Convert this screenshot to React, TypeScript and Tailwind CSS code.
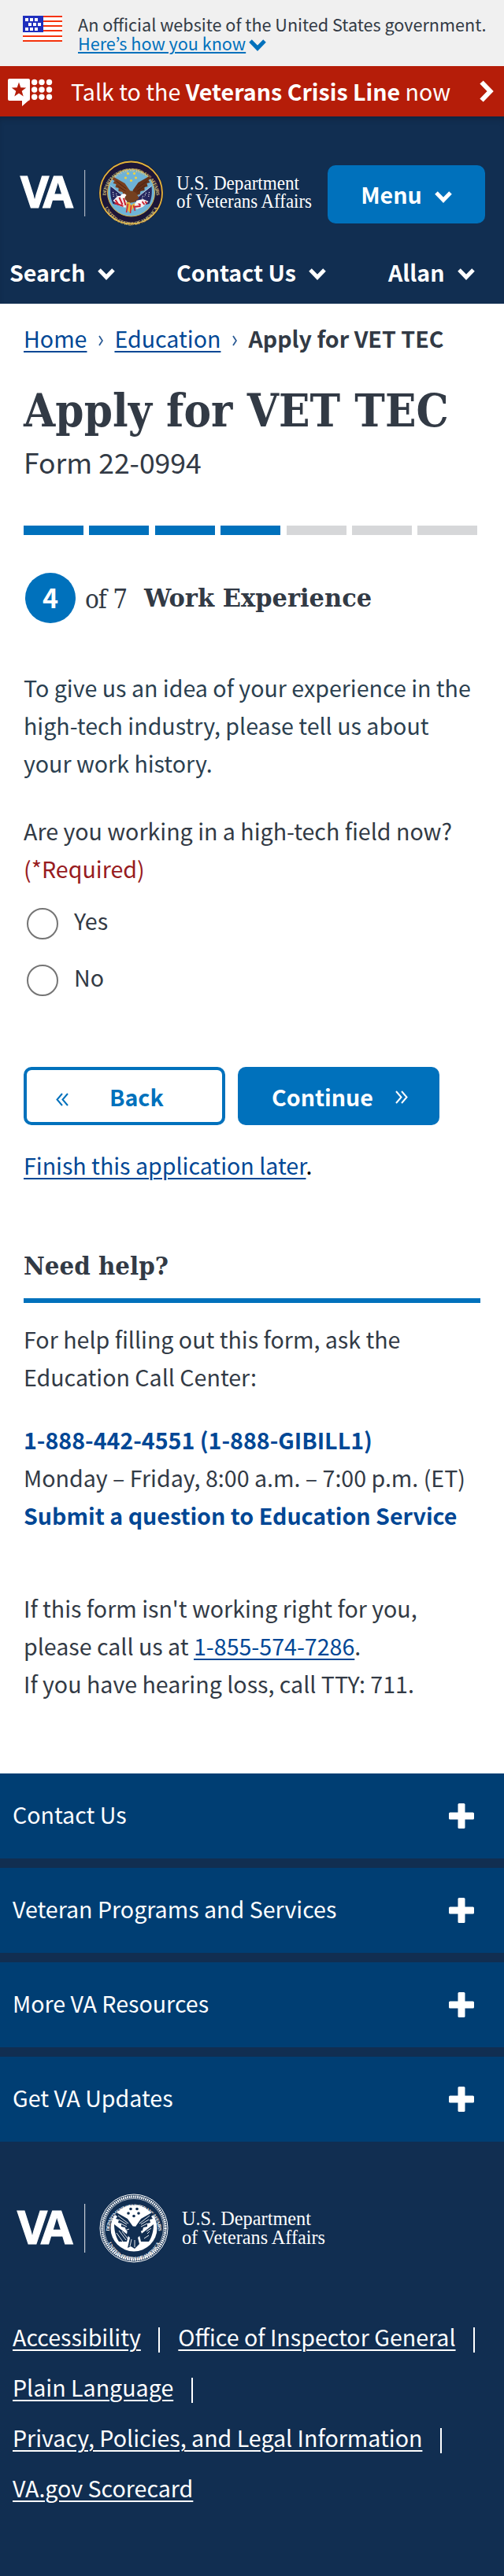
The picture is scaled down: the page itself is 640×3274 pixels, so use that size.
import React from 'react';

const SANS = "font-['Noto_Sans_CJK_JP','Noto_Sans',sans-serif]";
const SLAB = "font-['DejaVu_Serif_Condensed','DejaVu_Serif',serif] [font-stretch:condensed]";

function ChevronDown({ className = '' }: { className?: string }) {
  return (
    <svg width="22" height="15" viewBox="0 0 22 15" fill="none" stroke="currentColor" strokeWidth="5" className={`shrink-0 ${className}`}>
      <path d="M2 2l9 9.300L20 2" />
    </svg>
  );
}

function ChevronRight({ className = '' }: { className?: string }) {
  return (
    <svg width="18" height="28" viewBox="0 0 18 28" fill="none" stroke="currentColor" strokeWidth="6" className={`shrink-0 ${className}`}>
      <path d="M2.500 2.500L13.600 14 2.500 25.500" />
    </svg>
  );
}

function Flag() {
  return (
    <svg width="50" height="33" viewBox="0 0 50 33" shapeRendering="crispEdges" className="mt-px">
      <rect width="50" height="33" fill="#fff" />
      {[0, 6, 12, 18, 25, 31].map((y) => (
        <rect key={y} y={y} width="50" height="2.400" fill="#f5330c" />
      ))}
      <rect width="26" height="21" fill="#1f2fbd" />
      {[[3, 3], [9, 3], [15, 3], [7, 9], [13, 9], [19, 9], [3, 15], [9, 15], [15, 15]].map(([x, y]) => (
        <rect key={`${x}-${y}`} x={x} y={y} width="4" height="4" fill="#fff" />
      ))}
    </svg>
  );
}

function CrisisIcon() {
  return (
    <svg width="57" height="36" viewBox="0 0 57 36" fill="#fff" className="mt-1">
      <path d="M2 0h24a2 2 0 0 1 2 2v24a2 2 0 0 1-2 2l-8 7v-7H2a2 2 0 0 1-2-2V2a2 2 0 0 1 2-2z" />
      <path fill="#b51d09" d="M14 4.500l2.300 6.800 6.900.1-5.500 4.300 2 6.800-5.700-4-5.700 4 2-6.800L4.800 11.400l6.900-.1z" />
      {[4.500, 14, 23.300].map((y) => [33.700, 43, 52.500].map((x) => <circle key={`${x}-${y}`} cx={x} cy={y} r="3.700" />))}
    </svg>
  );
}

function Ring({ id, cx, cy, r, fill, size }: { id: string; cx: number; cy: number; r: number; fill: string; size: number }) {
  const b = r + size * 0.7;
  return (
    <g fill={fill} fontFamily="Liberation Serif" fontWeight="700" fontSize={size}>
      <path id={`${id}-top`} d={`M${cx - r} ${cy + 5}A${r} ${r} 0 1 1 ${cx + r} ${cy + 5}`} fill="none" />
      <path id={`${id}-bottom`} d={`M${cx - b} ${cy + 5}A${b} ${b} 0 0 0 ${cx + b} ${cy + 5}`} fill="none" />
      <text textAnchor="middle">
        <textPath href={`#${id}-top`} startOffset="50%" textLength={r * 3.05}>DEPARTMENT OF VETERANS AFFAIRS</textPath>
      </text>
      <text textAnchor="middle">
        <textPath href={`#${id}-bottom`} startOffset="50%" textLength={b * 2.35}>UNITED STATES OF AMERICA</textPath>
      </text>
    </g>
  );
}

const STAR_SPOTS = [[-4, -24.500], [4, -24.500], [-7, -19], [6, -19], [0, -15.500]];
const WING = 'M-1 -2L-8 -12-22 -20-24 -17-21 -15-23 -12-19 -11-20 -7-16 -6-16 -2-11 -1-10 3-2 5z';

function ColorSeal({ cx, cy }: { cx: number; cy: number }) {
  return (
    <g>
      <circle cx={cx} cy={cy} r="41" fill="#1c1638" />
      <circle cx={cx} cy={cy} r="39.500" fill="none" stroke="#e3b53a" strokeWidth="1.800" />
      <circle cx={cx} cy={cy} r="30" fill="#6fb3d6" stroke="#d9b13f" strokeWidth="1" />
      <Ring id="color" cx={cx} cy={cy} r={32} fill="#d8c27a" size={6.200} />
      <g transform={`translate(${cx} ${cy})`}>
        {STAR_SPOTS.map(([x, y]) => <circle key={`${x},${y}`} cx={x} cy={y} r="1.600" fill="#f2d13d" />)}
        <path d="M-26 -8L-3 9l-7 8-13-3c-3-6-4-14-3-22zM26 -8L3 9l7 8 13-3c3-6 4-14 3-22z" fill="#25275e" />
        <path d="M-26 -9L-8 6M26 -9L8 6" stroke="#d8d8e2" strokeWidth=".8" />
        <path d="M-23 10l6-6 8 0 4 5-2 10-7-2zM22 11l-7-3-8 2-3 5 3 6 8-3z" fill="#f3eeee" />
        <path d="M-20 9l4 6M-15 6l4 9M-10 5l3 11M-21 13l11 4M8 12l4 4M13 10l4 5M18 11l2 3M3 18l9-1" stroke="#c8202f" strokeWidth="2" />
        <path d="M-23 -1l1 7M-19 1l1 4M19 0l-2 5M23 -1l-1 7M15 4l-1 4" stroke="#fff" strokeWidth="1.200" strokeDasharray="1 1.500" />
        <path d={WING} fill="#7a3f1e" />
        <path d={WING} transform="translate(1 -1) scale(-1 1)" fill="#633017" />
        <path d="M-8 1c4-5 11-4 15 0l3 6-6 5-7 1-5-5z" fill="#75401f" />
        <path d="M-19 -15L-6 -5M-18 -9L-7 -2M20 -15L8 -6M18 -9L8 -2" stroke="#4a2412" strokeWidth="1" />
        <path d="M-14 5c1-4 6-5 8-2l-3 4-4-1z" fill="#fff" />
        <path d="M7 10l8-1-2 4-6 1z" fill="#fff" />
        <path d="M-6 12l4 0 2 4 4-3 1 3-4 6-3 3-4-4z" fill="#e6b73d" />
        <path d="M-4 14l-2 11M0 16l-1 10M3 16l2 7" stroke="#cf2633" strokeWidth="1.500" />
      </g>
    </g>
  );
}

function MonoSeal({ cx, cy }: { cx: number; cy: number }) {
  return (
    <g>
      <circle cx={cx} cy={cy} r="43" fill="#112e51" stroke="#fff" strokeWidth="1" />
      <circle cx={cx} cy={cy} r="40" fill="none" stroke="#fff" strokeWidth="3.200" strokeDasharray="1.700 0.900" />
      <circle cx={cx} cy={cy} r="37.600" fill="none" stroke="#fff" strokeWidth=".6" />
      <circle cx={cx} cy={cy} r="29.500" fill="#fff" />
      <Ring id="mono" cx={cx} cy={cy} r={31.300} fill="#fff" size={6.200} />
      <g transform={`translate(${cx} ${cy})`} fill="#112e51">
        {STAR_SPOTS.map(([x, y]) => <circle key={`${x},${y}`} cx={x} cy={y} r="1.800" />)}
        <path d={WING} />
        <path d={WING} transform="translate(1) scale(-1 1)" />
        <path d="M-8 1c4-5 12-4 16 0l2 6-6 6-8 0-5-5z" />
        <path d="M-25 -5L-7 9l-2 8-10 0c-4-6-6-14-6-22zM25 -5L7 9l2 8 10 0c4-6 6-14 6-22z" />
        <path d="M-5 12l10 0 2 8-6 6-5-3-4 2z" />
        <path d="M-22 6l8 11M-19 3l9 12M-15 4l7 9M20 4l-3 3M22 0l-6 4M19 9l-6 4M-20 -16L-7 -6M-19 -11l10 6M-17 -6l8 4M20 -16L7 -6M19 -11L9 -5M17 -6L9 -2M-3 14l-2 9M1 15l0 9M-12 3l6 -2" stroke="#fff" strokeWidth=".9" />
      </g>
    </g>
  );
}

function HeaderLogo() {
  return (
    <svg width="390" height="86" viewBox="20 202 390 86" fill="#fff" className="shrink-0 overflow-visible">
      <text x="26 54.500" y="264" fontFamily="Open Sans" fontWeight="700" fontSize="55.500" stroke="#fff" strokeWidth="1.200">VA</text>
      <rect x="107" y="216" width="1.200" height="59" fill="#a9b3c0" />
      <ColorSeal cx={166.500} cy={245} />
      <g fontFamily="Liberation Serif" fontSize="24.500">
        <text x="224" y="241" textLength="156" lengthAdjust="spacingAndGlyphs">U.S. Department</text>
        <text x="224" y="264" textLength="172" lengthAdjust="spacingAndGlyphs">of Veterans Affairs</text>
      </g>
    </svg>
  );
}

function FooterLogo() {
  return (
    <svg width="420" height="90" viewBox="16 2787 420 90" fill="#fff" className="overflow-visible">
      <text x="22 52" y="2852" fontFamily="Open Sans" fontWeight="700" fontSize="58.500" stroke="#fff" strokeWidth="1.200">VA</text>
      <rect x="107" y="2801" width="1.200" height="62" fill="#c4cbd4" />
      <MonoSeal cx={170} cy={2832} />
      <g fontFamily="Liberation Serif" fontSize="26">
        <text x="231" y="2828" textLength="164" lengthAdjust="spacingAndGlyphs">U.S. Department</text>
        <text x="231" y="2852" textLength="182" lengthAdjust="spacingAndGlyphs">of Veterans Affairs</text>
      </g>
    </svg>
  );
}

function Crumb() {
  return (
    <svg width="6" height="14" viewBox="0 0 6 14" className="mt-1.5" fill="none" stroke="#2a5a94" strokeWidth="1.800">
      <path d="M1 1l4 6-4 6" />
    </svg>
  );
}

function Guillemet({ className }: { className: string }) {
  return (
    <svg width="16" height="17" viewBox="0 0 16 17" fill="none" stroke="currentColor" strokeWidth="2" className={className}>
      <path d="M8 1L1.500 8.500 8 16M15 1L8.500 8.500 15 16" />
    </svg>
  );
}

function NavItem({ label, className = '' }: { label: string; className?: string }) {
  return (
    <button className={`flex items-center gap-4 leading-[48px] font-bold text-white ${className}`}>
      {label}
      <ChevronDown className="mt-1" />
    </button>
  );
}

function Radio({ label }: { label: string }) {
  return (
    <label className="flex h-[72px] items-start">
      <span className="mt-2 ml-1 size-10 rounded-full border-2 border-[#757575] bg-white" />
      <span className="ml-5">{label}</span>
    </label>
  );
}

const LINK = 'underline decoration-2 underline-offset-[4px]';

function FooterLink({ label, last = false }: { label: string; last?: boolean }) {
  return (
    <li className="flex items-center">
      <a className={LINK}>{label}</a>
      {!last && <span className="mr-[23px] ml-[22.5px] mt-2 h-8 w-0.5 bg-white" />}
    </li>
  );
}

export default function App() {
  return (
    <div className={`w-[640px] overflow-hidden bg-white text-[28.6px] leading-[48px] whitespace-nowrap text-[#323a45] ${SANS}`}>
      <div className="flex h-[84px] bg-[#f0f0f0] pt-[19px] pl-[29px]">
        <Flag />
        <div className="ml-5 text-[21.6px] leading-6">
          <p>An official website of the United States government.</p>
          <p className="flex items-center text-[#0071bc]">
            <a className="underline decoration-2 underline-offset-2">Here’s how you know</a>
            <ChevronDown className="mt-1 ml-1" />
          </p>
        </div>
      </div>

      <div className="flex h-16 items-center bg-[#b51d09] px-2.5 text-white">
        <CrisisIcon />
        <p className="ml-[23px] w-[500px]">
          Talk to the <b>Veterans Crisis Line</b> now
        </p>
        <ChevronRight className="ml-[19px]" />
      </div>

      <header className="h-[238px] bg-[#112e51] pt-[54px] shadow-[inset_0_6px_8px_-4px_rgba(0,0,0,0.25)]">
        <div className="flex items-start pl-5">
          <HeaderLogo />
          <button className="mt-2 ml-1.5 flex h-[74px] w-[200px] items-center justify-center gap-4 rounded-[10px] bg-[#0071bc] font-bold text-white">
            Menu
            <ChevronDown className="mt-1.5" />
          </button>
        </div>
        <nav className="mt-[34px] flex">
          <NavItem label="Search" className="ml-3 w-[212px]" />
          <NavItem label="Contact Us" className="w-[269px]" />
          <NavItem label="Allan" />
        </nav>
      </header>

      <main className="h-[1868px] px-[30px]">
        <nav className="flex items-center gap-[14.5px] pt-5">
          <a className={`text-[#004795] ${LINK}`}>Home</a>
          <Crumb />
          <a className={`text-[#004795] ${LINK}`}>Education</a>
          <Crumb />
          <b>Apply for VET TEC</b>
        </nav>
        <h1 className={`mt-8 text-[57.6px] leading-[72px] font-bold tracking-[0.1px] ${SLAB}`}>Apply for VET TEC</h1>
        <p className="mt-[5px] text-[35.5px]">Form 22-0994</p>

        <div className="mt-[57px] flex h-3 gap-[7.4px]">
          {[1, 2, 3, 4, 5, 6, 7].map((n) => (
            <span key={n} className={n <= 4 ? 'w-[76px] bg-[#0071bc]' : 'w-[76px] bg-[#d6d7d9]'} />
          ))}
        </div>

        <div className="mt-12 flex h-16 items-center">
          <span className="ml-0.5 flex size-16 items-center justify-center rounded-full bg-[#0071bc] pb-0.5 text-[34px] font-bold text-white">4</span>
          <span className={`mt-1 ml-3 w-[75px] text-[33px] tracking-[-1px] ${SLAB}`}>of 7</span>
          <h2 className={`w-max origin-left scale-x-[1.06] text-[32px] font-bold ${SLAB}`}>Work Experience</h2>
        </div>

        <p className="mt-[58px] text-[#2b3f50]">
          To give us an idea of your experience in the<br />high-tech industry, please tell us about<br />your work history.
        </p>
        <p className="mt-[38px]">
          Are you working in a high-tech field now?<br />
          <span className="text-[#981b1e]">(*Required)</span>
        </p>
        <div className="mt-[18px]">
          <Radio label="Yes" />
          <Radio label="No" />
        </div>

        <div className="mt-[66px] flex gap-4 font-bold">
          <button className="flex h-[74px] w-64 items-center rounded-[10px] border-4 border-[#0071bc] pt-0.5 pl-[37px] text-[#0071bc]">
            <Guillemet className="mt-1.5" />
            <span className="ml-[52px]">Back</span>
          </button>
          <button className="flex h-[74px] w-64 items-center rounded-[10px] bg-[#0071bc] pt-0.5 pl-[43px] text-white">
            <span className="w-[157px] text-left">Continue</span>
            <Guillemet className="rotate-180" />
          </button>
        </div>
        <p className="mt-[27px] text-black">
          <a className={`text-[#004795] ${LINK}`}>Finish this application later</a>.
        </p>

        <h3 className={`mt-20 w-max origin-left scale-x-[1.02] text-[32px] font-bold ${SLAB}`}>Need help?</h3>
        <div className="mt-[17px] h-1.5 bg-[#0071bc]" />
        <p className="mt-[22px]">
          For help filling out this form, ask the<br />Education Call Center:
        </p>
        <p className="mt-8">
          <b className="text-[#004795]">1-888-442-4551 (1-888-GIBILL1)</b><br />
          Monday – Friday, 8:00 a.m. – 7:00 p.m. (ET)<br />
          <b className="text-[#004795]">Submit a question to Education Service</b>
        </p>
        <p className="mt-[70px]">
          If this form isn't working right for you,<br />
          please call us at <a className={`text-[#004795] ${LINK}`}>1-855-574-7286</a>.<br />
          If you have hearing loss, call TTY: 711.
        </p>
      </main>

      <footer className="h-[1020px] bg-[#112e51] text-white">
        <ul className="flex flex-col gap-3">
          {['Contact Us', 'Veteran Programs and Services', 'More VA Resources', 'Get VA Updates'].map((t) => (
            <li key={t} className="flex h-[108px] items-center justify-between bg-[#003e73] pr-[38px] pl-4">
              <span className="pb-1">{t}</span>
              <svg width="32" height="32" viewBox="0 0 32 32" fill="#fff">
                <rect x="11.500" width="9" height="32" rx="1.500" />
                <rect y="11.500" width="32" height="9" rx="1.500" />
              </svg>
            </li>
          ))}
        </ul>
        <div className="mt-[65px] h-[90px] pl-4">
          <FooterLogo />
        </div>
        <ul className="mt-[61px] flex flex-wrap pl-4 leading-[64px]">
          <FooterLink label="Accessibility" />
          <FooterLink label="Office of Inspector General" />
          <FooterLink label="Plain Language" />
          <li className="w-[300px]" />
          <FooterLink label="Privacy, Policies, and Legal Information" />
          <FooterLink label="VA.gov Scorecard" last />
        </ul>
      </footer>
    </div>
  );
}
